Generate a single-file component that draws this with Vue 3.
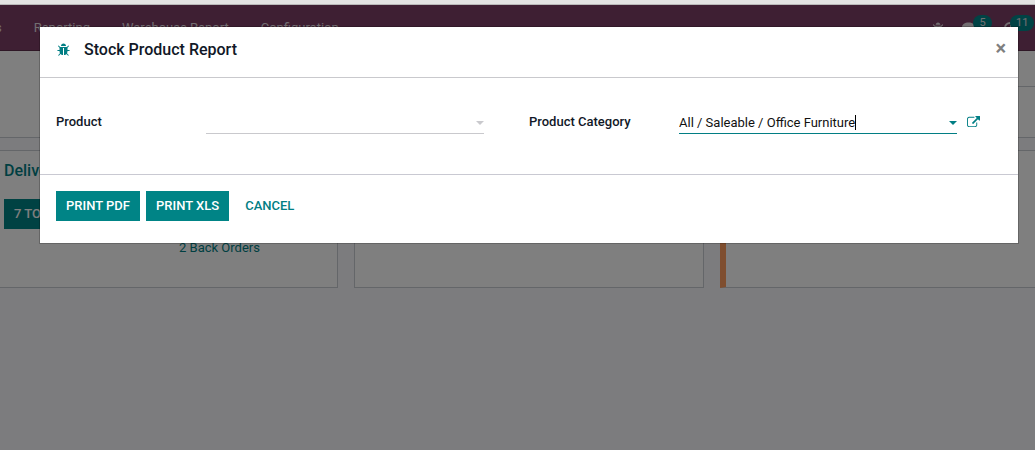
<script setup>
import { ref } from 'vue'

const product = ref('')
const category = ref('All / Saleable / Office Furniture')
const menus = ['Reporting', 'Warehouse Report', 'Configuration']

const bugPath = 'M1632 960q0 26-19 45t-45 19h-224q0 171-67 290l208 209q19 19 19 45t-19 45q-18 19-45 19t-45-19l-198-197q-5 5-15 13t-42 28.5-65 36.5-82 29-97 13v-896h-128v896q-51 0-101.5-13.5t-87-33-66-39-43.5-32.5l-15-14-183 207q-20 21-48 21-24 0-43-16-19-18-20.5-44.5t15.5-46.5l202-227q-58-114-58-274h-224q-26 0-45-19t-19-45 19-45 45-19h224v-294l-173-173q-19-19-19-45t19-45 45-19 45 19l173 173h844l173-173q19-19 45-19t45 19 19 45-19 45l-173 173v294h224q26 0 45 19t19 45zm-480-576h-640q0-133 93.5-226.5t226.5-93.5 226.5 93.5 93.5 226.5z'
const linkPath = 'M1408 928v320q0 119-84.5 203.5t-203.5 84.5h-832q-119 0-203.5-84.5t-84.5-203.5v-832q0-119 84.5-203.5t203.5-84.5h704q14 0 23 9t9 23v64q0 14-9 23t-23 9h-704q-66 0-113 47t-47 113v832q0 66 47 113t113 47h832q66 0 113-47t47-113v-320q0-14 9-23t23-9h64q14 0 23 9t9 23zm384-864v512q0 26-19 45t-45 19-45-19l-176-176-652 652q-10 10-23 10t-23-10l-114-114q-10-10-10-23t10-23l652-652-176-176q-19-19-19-45t19-45 45-19h512q26 0 45 19t19 45z'
</script>

<template>
  <div class="app">
    <div class="page">
      <header class="navbar">
        <nav class="menus">
          <a href="#" class="clipped">s</a>
          <a v-for="m in menus" :key="m" href="#">{{ m }}</a>
        </nav>
        <div class="systray">
          <button class="tray" aria-label="Debug">
            <svg width="12" height="13" viewBox="0 0 1664 1792"><path :d="bugPath" fill="currentColor" /></svg>
          </button>
          <button class="tray" aria-label="Messages">
            <svg width="13" height="12" viewBox="0 0 14 12"><path d="M7 0c3.9 0 7 2.200 7 5s-3.100 5-7 5c-.7 0-1.300 0-1.900-.2C4 11 2.600 11.600 1.200 11.800c.6-.7 1-1.500 1.200-2.700C.9 8.100 0 6.600 0 5c0-2.800 3.100-5 7-5z" fill="currentColor" /></svg>
            <span class="badge">5</span>
          </button>
          <button class="tray clock" aria-label="Activities">
            <svg width="12" height="12" viewBox="0 0 12 12"><circle cx="6" cy="6" r="5" fill="none" stroke="currentColor" stroke-width="2" /><path d="M6.500 3v3.500H4" fill="none" stroke="currentColor" /></svg>
            <span class="badge">11</span>
          </button>
        </div>
      </header>
      <section class="control-panel"><div class="panel-side"></div></section>
      <main class="board">
        <article class="card first">
          <h2>Delivery Orders</h2>
          <button class="btn primary">7 To Process</button>
          <a href="#" class="back-orders">2 Back Orders</a>
        </article>
        <article class="card"></article>
        <article class="card accent"></article>
      </main>
    </div>
    <div class="backdrop"></div>
    <div class="browser-edge"></div>

    <div class="modal" role="dialog" aria-labelledby="dialog-title">
      <header class="modal-header">
        <svg class="bug" width="13" height="14" viewBox="0 0 1664 1792" aria-hidden="true"><path :d="bugPath" fill="currentColor" /></svg>
        <h1 id="dialog-title">Stock Product Report</h1>
        <button class="close" aria-label="Close">×</button>
      </header>
      <form class="modal-body" @submit.prevent>
        <div class="group">
          <label for="product">Product</label>
          <div class="field">
            <input id="product" v-model="product" type="text" autocomplete="off" />
            <span class="arrow"></span>
          </div>
          <div class="trail"></div>
        </div>
        <div class="group">
          <label for="category">Product Category</label>
          <div class="field active">
            <input id="category" v-model="category" type="text" autocomplete="off" />
            <span class="cursor"></span>
            <span class="arrow"></span>
          </div>
          <div class="trail">
            <button type="button" class="external" aria-label="External link">
              <svg width="13" height="13" viewBox="0 -128 1792 1792"><path :d="linkPath" fill="currentColor" /></svg>
            </button>
          </div>
        </div>
      </form>
      <footer class="modal-footer">
        <button class="btn primary">Print PDF</button>
        <button class="btn primary">Print XLS</button>
        <button class="btn link">Cancel</button>
      </footer>
    </div>
  </div>
</template>

<style>
body {
  margin: 0;
  background: #f8f8fd;
}
</style>

<style scoped>
* {
  box-sizing: border-box;
}
.app {
  position: relative;
  min-height: 100vh;
  overflow: hidden;
  font-family: Roboto, "Liberation Sans", sans-serif;
  font-size: 13px;
  line-height: 20px;
  color: #111827;
}
button {
  font: inherit;
  border: 0;
  padding: 0;
  background: none;
  color: inherit;
}
a {
  text-decoration: none;
  color: #017e84;
}
h1, h2 {
  margin: 0;
  font-size: 16px;
  font-weight: 500;
}
.page {
  padding-top: 5px;
}
.browser-edge {
  position: absolute;
  top: 0;
  left: 0;
  right: 0;
  height: 5px;
  background: #e3e3e3;
  border-bottom: 1px solid #b9b9b9;
}
.backdrop {
  position: absolute;
  inset: 0;
  background: rgba(0, 0, 0, 0.5);
}
.navbar {
  display: flex;
  justify-content: space-between;
  height: 46px;
  background: #7c3f66;
  border-bottom: 1px solid #5e2f4d;
}
.menus {
  display: flex;
  align-items: center;
  gap: 32px;
}
.menus a {
  color: #e5dce2;
}
.menus .clipped {
  margin-left: -5px;
}
.systray {
  display: flex;
  align-items: center;
  gap: 18px;
  padding-top: 1px;
  color: #e5dce2;
}
.tray {
  position: relative;
  display: flex;
}
.tray:nth-child(2) {
  margin-right: 11px;
}
.clock {
  margin-right: 19px;
}
.badge {
  position: absolute;
  left: 11px;
  bottom: 3px;
  min-width: 19px;
  padding: 0 6px;
  border-radius: 8px;
  background: #00878a;
  font-size: 11px;
  line-height: 16px;
}
.clock .badge {
  left: 6px;
}
.control-panel {
  display: flex;
  justify-content: flex-end;
  height: 87px;
  background: #fff;
  border-bottom: 1px solid #c9ccd2;
}
.panel-side {
  width: 32px;
  height: 36px;
  border-bottom: 1px solid #c9ccd2;
}
.board {
  display: grid;
  grid-template-columns: repeat(3, 350px);
  gap: 16px;
  margin: 12px 0 0 -12px;
}
.card {
  height: 138px;
  border: 1px solid #c9ccd2;
  background: #fff;
}
.first {
  display: grid;
  grid-template-columns: 175px 1fr;
  align-content: start;
  padding: 10px 15px 0;
}
.first h2 {
  grid-column: 1 / -1;
  margin-bottom: 18px;
  color: #017e84;
}
.first .btn {
  justify-self: start;
}
.back-orders {
  grid-column: 2;
  margin-top: 39px;
}
.accent {
  border-left: 6px solid #ff9c5f;
}
.modal {
  position: absolute;
  top: 26px;
  left: 39px;
  right: 16px;
  border: 1px solid rgba(0, 0, 0, 0.2);
  background: #fff;
  background-clip: padding-box;
}
.modal-header {
  display: flex;
  align-items: center;
  height: 51px;
  padding: 0 12px 4px 17px;
  border-bottom: 1px solid #c9c9cd;
}
.bug {
  color: #017e84;
  margin-right: 14px;
}
.modal-header h1 {
  flex: 1;
  color: #111827;
}
.close {
  padding-bottom: 4px;
  color: #7f7f7f;
  font-size: 20px;
  font-weight: 700;
}
.modal-body {
  display: grid;
  grid-template-columns: 1fr 1fr;
  padding: 32px 16px 40px;
}
.group {
  display: flex;
}
.group label {
  width: 150px;
  padding-top: 2px;
  font-weight: 500;
}
.field {
  position: relative;
  flex: 1;
  height: 24px;
  border-bottom: 1px solid #c9c9cd;
}
.field input {
  display: block;
  width: 100%;
  height: 24px;
  padding: 1px 20px 0 0;
  border: 0;
  outline: 0;
  background: none;
  font: inherit;
  color: #111;
}
.active {
  border-color: #017e84;
}
.arrow {
  position: absolute;
  right: 0;
  top: 11px;
  border: 4px solid transparent;
  border-top-color: #c9c9cd;
  border-bottom: 0;
}
.active .arrow {
  border-top-color: #017e84;
}
.cursor {
  position: absolute;
  left: 176px;
  top: 5px;
  width: 1px;
  height: 15px;
  background: #000;
}
.trail {
  width: 45px;
  padding: 5px 0 0 10px;
}
.external {
  display: flex;
  color: #017e84;
}
.modal-footer {
  display: flex;
  gap: 6px;
  padding: 16px 16px 22px;
  border-top: 1px solid #c9c9d2;
}
.btn {
  height: 30px;
  padding: 0 10px;
  font-weight: 500;
  text-transform: uppercase;
}
.primary {
  background: #008486;
  color: #fff;
}
.link {
  color: #017e84;
}
</style>
